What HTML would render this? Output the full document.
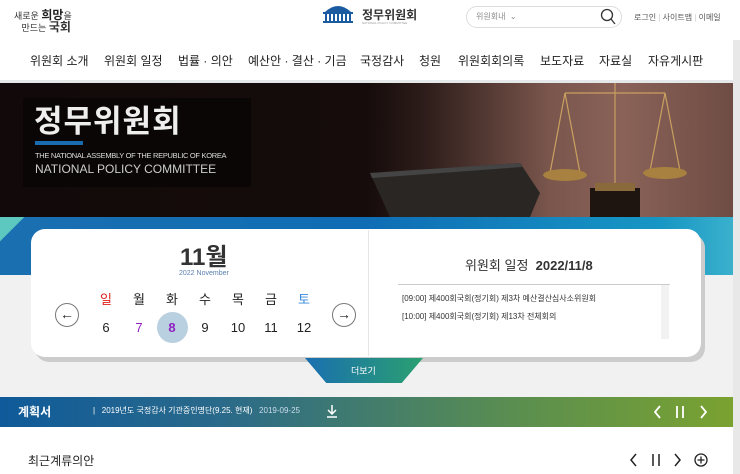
<!DOCTYPE html>
<html><head><meta charset="utf-8"><style>
*{margin:0;padding:0;box-sizing:border-box}
body{width:740px;height:474px;overflow:hidden;background:#f1f1f1;font-family:"Liberation Sans","Noto Sans CJK KR",sans-serif;position:relative;color:#222}
.abs{position:absolute}
.hdr{left:0;top:0;width:740px;height:80px;background:#fff}
.nav span{position:absolute;top:52px;font-size:12px;color:#222;white-space:nowrap}
.banner{left:0;top:83px;width:733px;height:134px;background:linear-gradient(90deg,#120a0a 0%,#150c0b 50%,#2e1d1a 58%,#7a564d 75%,#8a6258 85%,#6e4c44 100%)}
.card{left:31px;top:229px;width:670px;height:128px;background:#fff;border-radius:14px;box-shadow:4px 5px 0 #ccc}
.day{position:absolute;font-size:13px;width:30px;text-align:center}
</style></head><body>
<div class="abs hdr"></div>
<div class="abs" style="left:733px;top:40px;width:7px;height:434px;background:#e8e8e8"></div>
<div class="abs" style="left:14px;top:10px;font-size:9px;line-height:11px;color:#333">새로운 <b style="font-size:12px;color:#222">희망</b>을<br>&nbsp;&nbsp;&nbsp;만드는 <b style="font-size:12px">국회</b></div>
<svg class="abs" style="left:320px;top:3px" width="36" height="20" viewBox="0 0 36 20"><path d="M5 9 Q18 -3 31 9Z" fill="#1a5aa0"/><rect x="3" y="9" width="30" height="2" fill="#1a5aa0"/><g fill="#1a5aa0"><rect x="5" y="11" width="2" height="7"/><rect x="9" y="11" width="2" height="7"/><rect x="13" y="11" width="2" height="7"/><rect x="17" y="11" width="2" height="7"/><rect x="21" y="11" width="2" height="7"/><rect x="25" y="11" width="2" height="7"/><rect x="29" y="11" width="2" height="7"/></g><rect x="3" y="18" width="30" height="2" fill="#1a5aa0"/></svg>
<div class="abs" style="left:362px;top:6px;font-size:12px;font-weight:bold;color:#333">정무위원회</div>
<div class="abs" style="left:362px;top:21px;font-size:3px;color:#999">NATIONAL POLICY COMMITTEE</div>
<div class="abs" style="left:466px;top:6px;width:156px;height:22px;border:1px solid #ddd;border-radius:11px"></div>
<div class="abs" style="left:476px;top:11px;font-size:8px;color:#888">위원회내 &nbsp;⌄</div>
<svg class="abs" style="left:600px;top:8px" width="16" height="17"><circle cx="7" cy="7" r="5.5" fill="none" stroke="#333" stroke-width="1.3"/><line x1="11" y1="11" x2="15" y2="16" stroke="#333" stroke-width="1.3"/></svg>
<div class="abs" style="left:634px;top:12px;font-size:8px;color:#555;white-space:nowrap">로그인 <span style="color:#ccc">|</span> 사이트맵 <span style="color:#ccc">|</span> 이메일</div>
<div class="nav"><span style="left:30px">위원회 소개</span><span style="left:104px">위원회 일정</span><span style="left:178px">법률 · 의안</span><span style="left:248px">예산안 · 결산 · 기금</span><span style="left:360px">국정감사</span><span style="left:419px">청원</span><span style="left:458px">위원회회의록</span><span style="left:540px">보도자료</span><span style="left:599px">자료실</span><span style="left:648px">자유게시판</span></div>
<div class="abs" style="left:0;top:80px;width:733px;height:3px;background:#e4e8e8"></div>
<div class="abs banner"></div>
<svg class="abs" style="left:370px;top:83px" width="363" height="134">
<path d="M0 90 L150 80 L170 110 L160 134 L20 134Z" fill="#2a2624"/>
<path d="M0 90 L150 80 L152 84 L2 95Z" fill="#444"/>
<g stroke="#c9a060" stroke-width="1.2" fill="none"><line x1="245" y1="0" x2="245" y2="110"/><line x1="195" y1="10" x2="295" y2="10"/><line x1="195" y1="10" x2="180" y2="90"/><line x1="195" y1="10" x2="210" y2="90"/><line x1="295" y1="10" x2="280" y2="88"/><line x1="295" y1="10" x2="310" y2="88"/></g>
<ellipse cx="195" cy="92" rx="22" ry="6" fill="#a88040"/><ellipse cx="295" cy="90" rx="22" ry="6" fill="#a88040"/>
<rect x="220" y="105" width="50" height="29" fill="#1e1410"/><rect x="225" y="100" width="40" height="8" fill="#8a6a3a"/>
</svg>
<div class="abs" style="left:23px;top:98px;width:228px;height:89px;background:#0a0606"></div>
<div class="abs" style="left:34px;top:96px;font-size:31px;color:#eee;font-weight:bold;letter-spacing:1px">정무위원회</div>
<div class="abs" style="left:35px;top:141px;width:48px;height:4px;background:#1a6cb0"></div>
<div class="abs" style="left:35px;top:151px;font-size:7.5px;color:#ddd;letter-spacing:-.3px">THE NATIONAL ASSEMBLY OF THE REPUBLIC OF KOREA</div>
<div class="abs" style="left:35px;top:162px;font-size:12px;color:#ccc">NATIONAL POLICY COMMITTEE</div>
<div class="abs" style="left:0;top:217px;width:733px;height:58px;background:linear-gradient(90deg,#1a6fb0,#0f6db5 50%,#1696c4 90%,#3ab0cc)"></div>
<div class="abs" style="left:0;top:217px;width:30px;height:30px;background:linear-gradient(135deg,#5cc8c0 40%,transparent 41%)"></div>
<div class="abs card"></div>
<div class="abs" style="left:368px;top:230px;width:1px;height:126px;background:#e6e6e6"></div>
<div class="abs" style="left:180px;top:237px;font-size:24px;font-weight:bold;color:#333">11월</div>
<div class="abs" style="left:179px;top:270px;font-size:7px;color:#5a7fb0">2022 November</div>
<div class="abs" style="left:55px;top:303px;width:24px;height:24px;border:1px solid #777;border-radius:50%;text-align:center;font-size:14px;line-height:21px">←</div>
<div class="abs" style="left:332px;top:303px;width:24px;height:24px;border:1px solid #777;border-radius:50%;text-align:center;font-size:14px;line-height:21px">→</div>
<div class="abs" style="left:157px;top:312px;width:31px;height:31px;border-radius:50%;background:#b9d0e0"></div>
<div class="day" style="left:91px;top:289px;color:#e02020">일</div><div class="day" style="left:124px;top:289px">월</div><div class="day" style="left:157px;top:289px">화</div><div class="day" style="left:190px;top:289px">수</div><div class="day" style="left:223px;top:289px">목</div><div class="day" style="left:256px;top:289px">금</div><div class="day" style="left:289px;top:289px;color:#3a8ad8">토</div>
<div class="day" style="left:91px;top:320px">6</div><div class="day" style="left:124px;top:320px;color:#9020c0">7</div><div class="day" style="left:157px;top:320px;color:#9020c0;font-weight:bold">8</div><div class="day" style="left:190px;top:320px">9</div><div class="day" style="left:223px;top:320px">10</div><div class="day" style="left:256px;top:320px">11</div><div class="day" style="left:289px;top:320px">12</div>
<div class="abs" style="left:465px;top:255px;font-size:13px;color:#333">위원회 일정 &nbsp;<b>2022/11/8</b></div>
<div class="abs" style="left:398px;top:284px;width:272px;height:55px;border-top:1px solid #ccc"></div>
<div class="abs" style="left:661px;top:285px;width:8px;height:54px;background:#f2f2f2"></div>
<div class="abs" style="left:402px;top:290px;font-size:8px;color:#333;line-height:18px">[09:00] 제400회국회(정기회) 제3차 예산결산심사소위원회<br>[10:00] 제400회국회(정기회) 제13차 전체회의</div>
<div class="abs" style="left:305px;top:358px;width:118px;height:25px;background:linear-gradient(90deg,#1a6fb0,#2aa070);clip-path:polygon(0 0,100% 0,82% 100%,18% 100%)"></div>
<div class="abs" style="left:351px;top:364px;font-size:9px;color:#fff">더보기</div>
<div class="abs" style="left:0;top:397px;width:733px;height:30px;background:linear-gradient(90deg,#0f5a9a,#2a6a8a 30%,#5a8e50 70%,#7aa230)"></div>
<div class="abs" style="left:18px;top:403px;font-size:12px;color:#fff;font-weight:bold">계획서</div>
<div class="abs" style="left:93px;top:405px;font-size:8px;color:#fff;white-space:nowrap">| &nbsp;&nbsp;2019년도 국정감사 기관증인명단(9.25. 현재) &nbsp;&nbsp;<span style="color:#cde">2019-09-25</span></div>
<svg class="abs" style="left:325px;top:404px" width="14" height="14"><path d="M7 1 V10 M3 6 L7 10 L11 6 M2 13 H12" stroke="#fff" stroke-width="1.5" fill="none"/></svg>
<svg class="abs" style="left:652px;top:404px" width="60" height="16"><path d="M8 2 L3 8 L8 14 M25 2 V14 M31 2 V14 M49 2 L54 8 L49 14" stroke="#fff" stroke-width="1.8" fill="none"/></svg>
<div class="abs" style="left:0;top:427px;width:733px;height:47px;background:#fff"></div>
<div class="abs" style="left:28px;top:452px;font-size:12px;color:#222">최근계류의안</div>
<svg class="abs" style="left:627px;top:452px" width="84" height="16"><path d="M9 2 L4 8 L9 14 M26 2 V14 M32 2 V14 M48 2 L53 8 L48 14" stroke="#222" stroke-width="1.5" fill="none"/><circle cx="74" cy="8" r="6" stroke="#222" stroke-width="1.3" fill="none"/><path d="M74 4.5 V11.5 M70.5 8 H77.5" stroke="#222" stroke-width="1.3"/></svg>
</body></html>
